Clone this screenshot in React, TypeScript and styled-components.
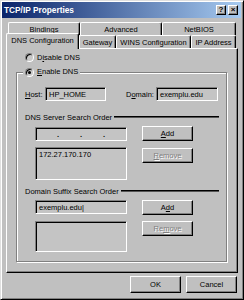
import styled, { createGlobalStyle } from 'styled-components';

const GlobalStyle = createGlobalStyle`
  html, body {
    margin: 0;
    padding: 0;
    background: #c0c0c0;
  }
  body {
    font-family: "Liberation Sans", Arial, sans-serif;
    font-size: 7.5px;
    color: #000;
  }
  * {
    box-sizing: border-box;
  }
`;

const Window = styled.div`
  width: 244px;
  height: 300px;
  background: #c0c0c0;
  border: 1px solid;
  border-color: #dfdfdf #000 #000 #dfdfdf;
  box-shadow: inset 1px 1px #fff, inset -1px -1px #808080;
  padding: 1px 2px 2px 1px;
  display: flex;
  flex-direction: column;
`;

const TitleBar = styled.div`
  height: 16px;
  flex-shrink: 0;
  background: linear-gradient(to right, #0a246a, #a6caf0);
  display: flex;
  align-items: center;
  padding: 0 3px 0 2px;
  color: #fff;
  font-weight: bold;
  font-size: 8.3px;
`;

const Title = styled.div`
  flex: 1;
`;

const CaptionButtons = styled.div`
  display: flex;
  gap: 2px;
`;

const CaptionButton = styled.div`
  width: 10px;
  height: 10px;
  background: #c0c0c0;
  border: 1px solid;
  border-color: #fff #000 #000 #fff;
  box-shadow: inset -1px -1px #808080;
  color: #000;
  font-size: 8px;
  font-weight: bold;
  line-height: 8px;
  text-align: center;
`;

const Body = styled.div`
  flex: 1;
  display: flex;
  flex-direction: column;
  padding: 0 3px 0 4px;
`;

const TabStrip = styled.div`
  margin-top: 4px;
  display: flex;
  flex-direction: column;
`;

const TabRow = styled.div<{ $indent: number }>`
  height: 13px;
  display: flex;
  align-items: flex-end;
  padding-left: ${(p) => p.$indent}px;
`;

const Tab = styled.div<{ $w: number; $active?: boolean }>`
  width: ${(p) => p.$w}px;
  height: ${(p) => (p.$active ? 16 : 13)}px;
  margin-bottom: ${(p) => (p.$active ? -1 : 0)}px;
  position: relative;
  z-index: ${(p) => (p.$active ? 2 : 1)};
  background: #c0c0c0;
  border: 1px solid;
  border-color: #fff #000 transparent #fff;
  border-bottom: none;
  border-radius: 2px 2px 0 0;
  box-shadow: inset -1px 0 #808080;
  display: flex;
  align-items: center;
  justify-content: center;
  padding-bottom: ${(p) => (p.$active ? 2 : 0)}px;
  white-space: nowrap;
`;

const Panel = styled.div`
  flex: 1;
  border: 1px solid;
  border-color: #fff #000 #000 #fff;
  box-shadow: inset -1px -1px #808080;
  padding: 2px 10px 0 9px;
  display: flex;
  flex-direction: column;
`;

const RadioRow = styled.label`
  height: 12px;
  display: flex;
  align-items: center;
  gap: 3px;
`;

const TopRadio = styled(RadioRow)`
  margin-left: 9px;
`;

const Radio = styled.span<{ $checked?: boolean }>`
  width: 9px;
  height: 9px;
  border-radius: 50%;
  border: 1px solid;
  border-color: #808080 #fff #fff #808080;
  box-shadow: inset 1px 1px #000;
  background: #c8c8c8;
  display: flex;
  align-items: center;
  justify-content: center;
  &::after {
    content: '';
    width: 3px;
    height: 3px;
    border-radius: 50%;
    background: ${(p) => (p.$checked ? '#000' : 'transparent')};
  }
`;

const Group = styled.fieldset`
  margin: 3px 0 0 0;
  padding: 0 7px 9px 8px;
  border: 1px solid #808080;
  box-shadow: 1px 1px 0 #fff, inset 1px 1px 0 #fff;
  min-width: 0;
  display: flex;
  flex-direction: column;
`;

const Legend = styled.legend`
  padding: 0 2px;
  margin-left: -2px;
  background: #c0c0c0;
  line-height: 12px;
`;

const HostRow = styled.div`
  margin-top: 9px;
  height: 14px;
  display: flex;
  align-items: center;
`;

const FieldLabel = styled.span<{ $w: number; $gap?: number }>`
  width: ${(p) => p.$w}px;
  margin-left: ${(p) => p.$gap || 0}px;
  flex-shrink: 0;
`;

const Edit = styled.div<{ $w?: number; $h?: number; $mt?: number }>`
  width: ${(p) => (p.$w ? `${p.$w}px` : 'auto')};
  height: ${(p) => p.$h || 14}px;
  margin-top: ${(p) => p.$mt || 0}px;
  flex-shrink: 0;
  background: #c4c4c4;
  border: 1px solid;
  border-color: #808080 #fff #fff #808080;
  box-shadow: inset 1px 1px #000;
  padding: 1px 2px 0 3px;
  display: flex;
  align-items: center;
  white-space: nowrap;
`;

const ListBox = styled(Edit)`
  align-items: flex-start;
  padding-top: 2px;
`;

const IpEdit = styled(Edit)`
  justify-content: space-evenly;
  padding: 0;
`;

const Dot = styled.span`
  font-weight: bold;
`;

const SectionLabel = styled.div<{ $mt: number }>`
  margin-top: ${(p) => p.$mt}px;
  height: 12px;
  display: flex;
  align-items: center;
  white-space: nowrap;
`;

const Rule = styled.div`
  flex: 1;
  height: 2px;
  margin-left: 2px;
  border-top: 1px solid #000;
  border-bottom: 1px solid #555;
`;

const OrderBlock = styled.div`
  margin: 3px 0 0 10px;
  display: grid;
  grid-template-columns: 92px 51px;
  column-gap: 15px;
  row-gap: 6px;
  align-items: start;
`;

const Button = styled.div<{ $disabled?: boolean; $mt?: number; $h?: number }>`
  height: ${(p) => p.$h || 15}px;
  margin-top: ${(p) => p.$mt || 0}px;
  background: #c0c0c0;
  border: 1px solid;
  border-color: #fff #000 #000 #fff;
  box-shadow: inset -1px -1px #808080;
  display: flex;
  align-items: center;
  justify-content: center;
  color: ${(p) => (p.$disabled ? '#808080' : '#000')};
  text-shadow: ${(p) => (p.$disabled ? '1px 1px #fff' : 'none')};
`;

const Footer = styled.div`
  height: 24px;
  flex-shrink: 0;
  padding: 3px 1px 4px 0;
  display: flex;
  justify-content: flex-end;
  gap: 5px;
`;

const FooterButton = styled(Button)`
  width: 51px;
`;

export default function App() {
  return (
    <>
      <GlobalStyle />
      <Window>
        <TitleBar>
          <Title>TCP/IP Properties</Title>
          <CaptionButtons>
            <CaptionButton>?</CaptionButton>
            <CaptionButton>×</CaptionButton>
          </CaptionButtons>
        </TitleBar>
        <Body>
          <TabStrip>
            <TabRow $indent={2}>
              <Tab $w={72}>Bindings</Tab>
              <Tab $w={82}>Advanced</Tab>
              <Tab $w={74}>NetBIOS</Tab>
            </TabRow>
            <TabRow $indent={0}>
              <Tab $w={73} $active>
                DNS Configuration
              </Tab>
              <Tab $w={37}>Gateway</Tab>
              <Tab $w={75}>WINS Configuration</Tab>
              <Tab $w={45}>IP Address</Tab>
            </TabRow>
          </TabStrip>
          <Panel>
            <TopRadio>
              <Radio />
              <span>
                D<u>i</u>sable DNS
              </span>
            </TopRadio>
            <Group>
              <Legend>
                <RadioRow>
                  <Radio $checked />
                  <span>
                    <u>E</u>nable DNS
                  </span>
                </RadioRow>
              </Legend>
              <HostRow>
                <FieldLabel $w={20}>
                  <u>H</u>ost:
                </FieldLabel>
                <Edit $w={61}>HP_HOME</Edit>
                <FieldLabel $w={30} $gap={20}>
                  D<u>o</u>main:
                </FieldLabel>
                <Edit $w={62}>exemplu.edu</Edit>
              </HostRow>
              <SectionLabel $mt={10}>
                DNS Server Search Order
                <Rule />
              </SectionLabel>
              <OrderBlock>
                <IpEdit $mt={1}>
                  <Dot>.</Dot>
                  <Dot>.</Dot>
                  <Dot>.</Dot>
                </IpEdit>
                <Button>
                  <span>
                    <u>A</u>dd
                  </span>
                </Button>
                <ListBox $h={33}>172.27.170.170</ListBox>
                <Button $disabled $mt={1}>
                  <span>
                    <u>R</u>emove
                  </span>
                </Button>
              </OrderBlock>
              <SectionLabel $mt={5}>
                Domain Suffix Search Order
                <Rule />
              </SectionLabel>
              <OrderBlock>
                <Edit>exemplu.edu|</Edit>
                <Button>
                  <span>
                    A<u>d</u>d
                  </span>
                </Button>
                <ListBox $h={31} />
                <Button $disabled>
                  <span>
                    Re<u>m</u>ove
                  </span>
                </Button>
              </OrderBlock>
            </Group>
          </Panel>
          <Footer>
            <FooterButton $h={17}>OK</FooterButton>
            <FooterButton $h={17}>Cancel</FooterButton>
          </Footer>
        </Body>
      </Window>
    </>
  );
}
